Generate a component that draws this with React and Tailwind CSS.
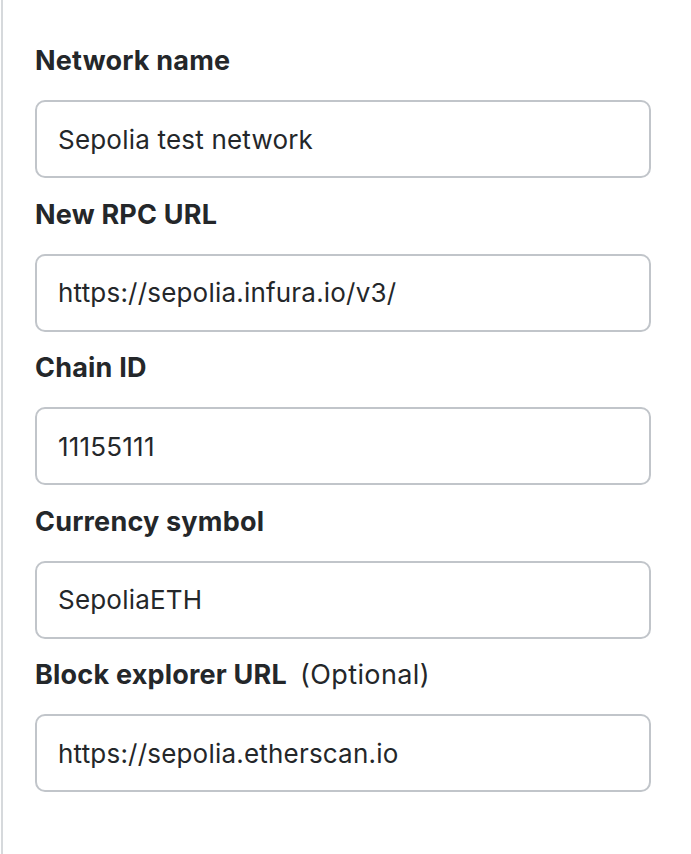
import React from "react";

const fields = [
  { label: "Network name", value: "Sepolia test network" },
  { label: "New RPC URL", value: "https://sepolia.infura.io/v3/" },
  { label: "Chain ID", value: "11155111" },
  { label: "Currency symbol", value: "SepoliaETH" },
  { label: "Block explorer URL", value: "https://sepolia.etherscan.io", optional: true },
];

const Field = ({ label, value, optional }) => (
  <div className="flex flex-col">
    <div className="h-[36px] leading-[36px] text-[27px] text-[#24272a] flex items-center gap-[13px]">
      <span className="font-bold tracking-[0.2px]">{label}</span>
      {optional && <span className="font-normal tracking-[0.4px]">(Optional)</span>}
    </div>
    <input
      className="mt-[21px] h-[78px] w-full rounded-[10px] border-2 border-[#c1c5ca] bg-white px-[21px] text-[26px] tracking-[0.2px] text-[#24272a] outline-none"
      type="text"
      defaultValue={value}
      readOnly
    />
  </div>
);

export default function App() {
  return (
    <div
      className="min-h-[854px] w-[691px] bg-white border-l-[2px] border-[#d6d9dc] ml-[1px]"
      style={{ fontFamily: "Inter, Lato, sans-serif" }}
    >
      <div className="flex flex-col gap-[18.5px] pt-[43px] pl-[32px] pr-[41px]">
        {fields.map((f) => (
          <Field key={f.label} {...f} />
        ))}
      </div>
    </div>
  );
}
